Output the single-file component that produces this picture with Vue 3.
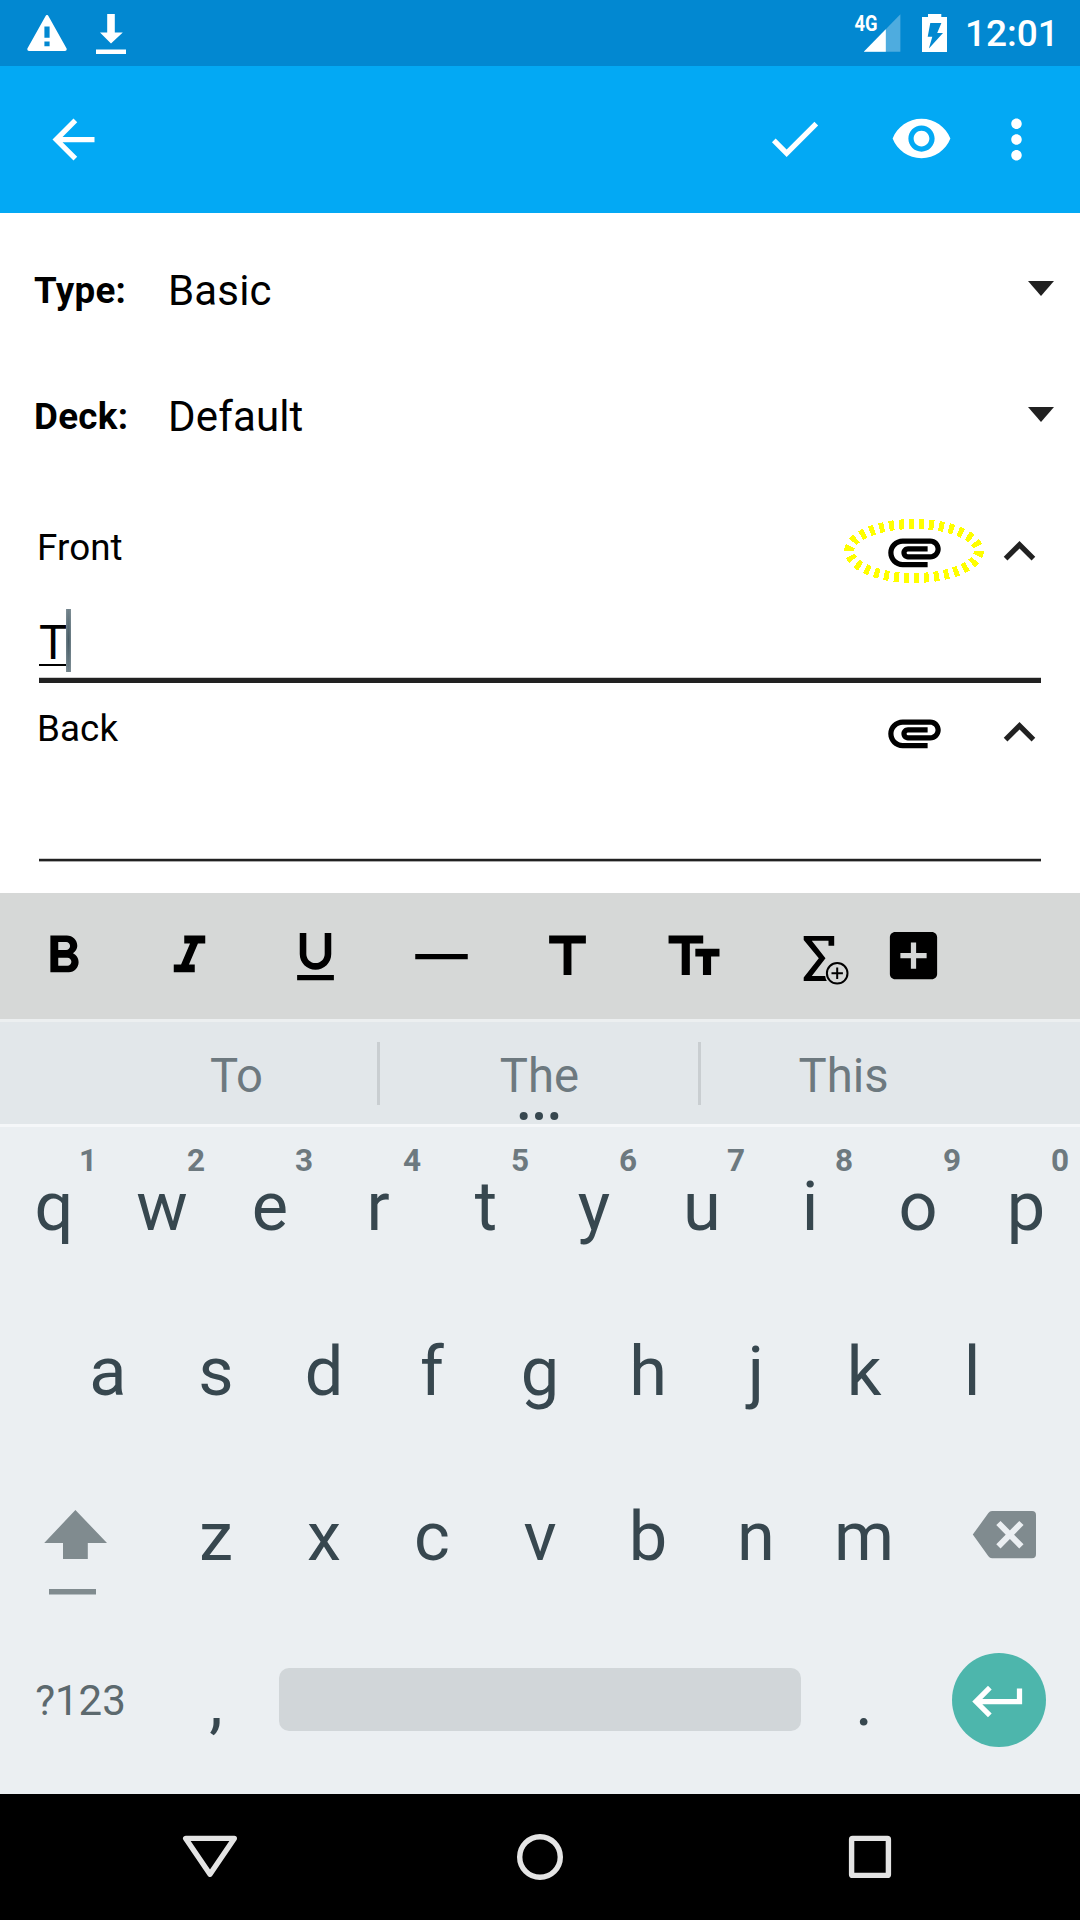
<script setup>
const selectors = [
  { label: 'Type:', value: 'Basic' },
  { label: 'Deck:', value: 'Default' }
]

const fields = [
  { name: 'Front', value: 'T', active: true },
  { name: 'Back', value: '', active: false }
]

const formatIcons = [
  { name: 'bold', d: 'M15.6 10.79c.97-.67 1.65-1.77 1.65-2.79 0-2.26-1.75-4-4-4H7v14h7.04c2.09 0 3.71-1.7 3.71-3.79 0-1.52-.86-2.82-2.15-3.42zM10 6.5h3c.83 0 1.5.67 1.5 1.5s-.67 1.5-1.5 1.5h-3v-3zm3.5 9H10v-3h3.5c.83 0 1.5.67 1.5 1.5s-.67 1.5-1.5 1.5z' },
  { name: 'italic', d: 'M10 4v3h2.21l-3.42 8H6v3h8v-3h-2.21l3.42-8H18V4z' },
  { name: 'underline', d: 'M12 17c3.31 0 6-2.69 6-6V3h-2.5v8c0 1.93-1.57 3.5-3.5 3.5S8.5 12.93 8.5 11V3H6v8c0 3.31 2.69 6 6 6zm-7 2v2h14v-2H5z' },
  { name: 'rule', d: 'M2 11h20v2H2z' },
  { name: 'title', d: 'M5 4v3h5.5v12h3V7H19V4z' },
  { name: 'size', d: 'M2.5 4v3h5v12h3.1V7h5.1V4zM21.9 9h-9.2v3h2.9v7h3.1v-7h3.2z' }
]

const suggestions = ['To', 'The', 'This']

const topRow = [...'qwertyuiop'].map((letter, i) => ({ letter, hint: String((i + 1) % 10) }))
const homeRow = [...'asdfghjkl']
const bottomRow = [...'zxcvbnm']
</script>

<template>
  <div class="screen">
    <header class="status">
      <div class="status-group">
        <svg class="warning" width="40" height="36" viewBox="0 0 40 36">
          <path fill="#fff" fill-rule="evenodd" d="M18.6.9Q20 -1 21.4.9L39.6 33.4Q40.2 35.8 38 36H2Q-.2 35.8.4 33.4ZM17.4 11.6v11.2h5.2V11.6ZM17.4 26.4v4.8h5.2v-4.8Z" />
        </svg>
        <svg class="download" width="30" height="40" viewBox="0 0 30 40">
          <path fill="#fff" d="M11.2 0h7.6v18.6h8L15 29.4 4 18.6h7.2zM0 35.4h30V40H0z" />
        </svg>
      </div>
      <div class="status-group">
        <svg class="signal" width="47" height="39" viewBox="0 0 47 39">
          <path fill="#fff" fill-opacity=".3" d="M45.4 1.3v37.4H8.8z" />
          <path fill="#fff" d="M30.8 16.3v22.4H8.8z" />
          <text class="network" x="-0.4" y="18.4" textLength="23" lengthAdjust="spacingAndGlyphs">4G</text>
        </svg>
        <svg class="battery" width="25" height="38" viewBox="0 0 25 38">
          <path fill="#fff" fill-rule="evenodd" d="M6 0h13.3v3H25v35H0V3h6zM8.3 9 5.7 22.7h4.6L6.9 34.6 21 19h-5.8l4.2-10z" />
        </svg>
        <span class="clock">12:01</span>
      </div>
    </header>

    <nav class="appbar">
      <svg class="icon back" viewBox="0 0 24 24"><path d="M20 11H7.83l5.59-5.59L12 4l-8 8 8 8 1.41-1.41L7.83 13H20z" /></svg>
      <svg class="icon check" viewBox="0 0 24 24"><path d="M9 16.17 4.83 12l-1.42 1.41L9 19 21 7l-1.41-1.41z" /></svg>
      <svg class="icon eye" viewBox="0 0 24 24"><path d="M12 4.5C7 4.5 2.73 7.61 1 12c1.73 4.39 6 7.5 11 7.5s9.27-3.11 11-7.5c-1.73-4.39-6-7.5-11-7.5zM12 17c-2.76 0-5-2.24-5-5s2.24-5 5-5 5 2.24 5 5-2.24 5-5 5zm0-8c-1.66 0-3 1.34-3 3s1.34 3 3 3 3-1.34 3-3-1.34-3-3-3z" /></svg>
      <svg class="icon more" viewBox="0 0 24 24"><path d="M12 8c1.1 0 2-.9 2-2s-.9-2-2-2-2 .9-2 2 .9 2 2 2zm0 2c-1.1 0-2 .9-2 2s.9 2 2 2 2-.9 2-2-.9-2-2-2zm0 6c-1.1 0-2 .9-2 2s.9 2 2 2 2-.9 2-2-.9-2-2-2z" /></svg>
    </nav>

    <main class="form">
      <div v-for="s in selectors" :key="s.label" class="selector">
        <span class="selector-label">{{ s.label }}</span>
        <span class="selector-value">{{ s.value }}</span>
        <svg class="caret" width="26" height="15" viewBox="0 0 26 15"><path fill="#212121" d="M0 0h26L13 15z" /></svg>
      </div>

      <section v-for="f in fields" :key="f.name" class="field">
        <div class="field-head">
          <span class="field-name">{{ f.name }}</span>
          <div class="clip">
            <svg class="icon" viewBox="0 0 24 24"><path d="M2 12.5C2 9.46 4.46 7 7.5 7H18c2.21 0 4 1.79 4 4s-1.79 4-4 4H9.5C8.12 15 7 13.88 7 12.5S8.12 10 9.5 10H17v2H9.41c-.55 0-.55 1 0 1H18c1.1 0 2-.9 2-2s-.9-2-2-2H7.5C5.57 9 4 10.57 4 12.5S5.57 16 7.5 16H17v2H7.5C4.46 18 2 15.54 2 12.5z" /></svg>
            <svg v-if="f.active" class="ring" width="144" height="68" viewBox="-72 -34 144 68">
              <ellipse rx="64.8" ry="27" pathLength="300" />
            </svg>
          </div>
          <svg class="icon chevron" viewBox="0 0 24 24"><path d="m12 8-6 6 1.41 1.41L12 10.83l4.59 4.58L18 14z" /></svg>
        </div>
        <div class="input" :class="{ active: f.active }">
          <template v-if="f.active">
            <span class="typed">{{ f.value }}</span>
            <span class="cursor"></span>
          </template>
        </div>
      </section>
    </main>

    <div class="format">
      <svg v-for="i in formatIcons" :key="i.name" class="icon format-icon" viewBox="0 0 24 24"><path :d="i.d" /></svg>
      <svg class="icon" viewBox="0 0 63 63">
        <path d="M15.7 11h30.5v9.7h-5.7v-5H23.8l13.7 17.6L23.8 51h13.4q.3 2.8 1.6 5H15.7v-3.6l15.1-19.1L15.7 15z" />
        <g fill="none" stroke="#000" stroke-width="2"><circle cx="49.2" cy="48.3" r="10.3" /><path d="M49.2 42.6v11.4M43.5 48.3h11.4" /></g>
      </svg>
      <svg class="icon add" viewBox="0 0 24 24"><path d="M19 3H5c-1.11 0-2 .9-2 2v14c0 1.1.89 2 2 2h14c1.1 0 2-.9 2-2V5c0-1.1-.9-2-2-2zm-2 10h-4v4h-2v-4H7v-2h4V7h2v4h4v2z" /></svg>
    </div>

    <div class="suggestions">
      <div v-for="(word, i) in suggestions" :key="word" class="suggestion">
        {{ word }}
        <svg v-if="i === 1" class="dots" width="40" height="8" viewBox="-20 -4 40 8"><circle cx="-15.3" r="4" /><circle r="4" /><circle cx="15.3" r="4" /></svg>
      </div>
    </div>

    <div class="keyboard">
      <div class="row">
        <div v-for="k in topRow" :key="k.letter" class="key">{{ k.letter }}<span class="hint">{{ k.hint }}</span></div>
      </div>
      <div class="row">
        <div v-for="k in homeRow" :key="k" class="key">{{ k }}</div>
      </div>
      <div class="row">
        <svg width="162" height="165" viewBox="0 0 162 165">
          <path fill="#808b8f" d="M75.4 53 107 86H87.8v16H63V86H44.2zM49 132h47v5.6H49z" />
        </svg>
        <div v-for="k in bottomRow" :key="k" class="key">{{ k }}</div>
        <svg width="162" height="165" viewBox="0 0 162 165">
          <path fill="#808b8f" d="M74 54h40q4 0 4 4v39.2q0 4-4 4H74q-2.2 0-3.6-2L54.8 77.6 70.4 56Q71.8 54 74 54z" />
          <path fill="none" stroke="#ebeff2" stroke-width="6" d="m80.4 66 23 23.4m0-23.4-23 23.4" />
        </svg>
      </div>
      <div class="row">
        <div class="key symbols">?123</div>
        <div class="key">,</div>
        <div class="space"></div>
        <div class="key">.</div>
        <div class="enter">
          <svg class="icon" viewBox="0 0 24 24"><path d="M19 7v4H5.83l3.58-3.59L8 6l-6 6 6 6 1.41-1.41L5.83 13H21V7z" /></svg>
        </div>
      </div>
    </div>

    <footer class="navbar">
      <svg width="60" height="60" viewBox="-30 -30 60 60"><path d="M-24.3-18.6h48.6L0 17.2z" /></svg>
      <svg width="60" height="60" viewBox="-30 -30 60 60"><circle r="20.3" /></svg>
      <svg width="60" height="60" viewBox="-30 -30 60 60"><rect x="-18.4" y="-18.6" width="36.8" height="37" rx="1" /></svg>
    </footer>
  </div>
</template>

<style>
body {
  margin: 0;
  background: #fff;
}
</style>

<style scoped>
.screen {
  display: flex;
  flex-direction: column;
  width: 1080px;
  height: 1920px;
  overflow: hidden;
  background: #fff;
  color: #000;
  font-family: Roboto, "Liberation Sans", sans-serif;
}
svg {
  display: block;
  flex: none;
}
.icon {
  width: 63px;
  height: 63px;
}

.status {
  display: flex;
  justify-content: space-between;
  height: 66px;
  background: #0288d1;
}
.status-group {
  display: flex;
}
.warning {
  margin: 14.5px 0 0 27.4px;
}
.download {
  margin: 13.7px 0 0 28.6px;
}
.signal {
  margin-top: 13px;
  overflow: visible;
}
.network {
  fill: #fff;
  font-size: 22.5px;
  font-weight: 700;
}
.battery {
  margin: 14px 0 0 20px;
}
.clock {
  width: 115px;
  margin-left: 18px;
  color: #fff;
  font-size: 37px;
  font-weight: 500;
  line-height: 68px;
}

.appbar {
  display: flex;
  height: 147px;
  background: #03a9f4;
  fill: #fff;
}
.back {
  margin: 42px 0 0 42px;
}
.check {
  margin: 41px 0 0 auto;
}
.eye {
  margin: 41px 0 0 64px;
}
.more {
  margin: 42px 32px 0;
}

.form {
  height: 666px;
  padding-top: 14px;
}
.selector {
  display: flex;
  align-items: center;
  height: 126px;
  padding: 0 26px 0 34px;
}
.selector-label {
  width: 134px;
  font-size: 36.75px;
  font-weight: 700;
  letter-spacing: 0.3px;
}
.selector-value {
  flex: 1;
  font-size: 42px;
  letter-spacing: 0.15px;
}
.caret {
  margin-bottom: 4px;
}
.field {
  height: 181px;
}
.field:nth-of-type(1) {
  margin-top: 24px;
}
.field-head {
  display: flex;
  align-items: center;
  height: 97px;
  padding: 0 29px 0 37px;
}
.field-name {
  flex: 1;
  margin-bottom: 8px;
  font-size: 36.75px;
  letter-spacing: 0.1px;
}
.clip {
  position: relative;
  margin-right: 42px;
}
.ring {
  position: absolute;
  left: -41px;
  top: -3px;
}
.ring ellipse {
  fill: none;
  stroke: #ff0;
  stroke-width: 10;
  stroke-dasharray: 5 5;
  shape-rendering: crispEdges;
}
.chevron {
  fill: #212121;
}
.input {
  display: flex;
  box-sizing: border-box;
  height: 81px;
  margin: 0 39px;
  padding-top: 9px;
  background: linear-gradient(#ccc 0 1px, #212121 1px 3px, #aaa 3px 4px) bottom / 100% 4px no-repeat;
}
.input.active {
  height: 83px;
  background: linear-gradient(#ccc 0 1px, #212121 1px) bottom / 100% 6px no-repeat;
}
.typed {
  height: 54.7px;
  border-bottom: 2px solid #000;
  font-size: 47.25px;
  line-height: 69px;
}
.cursor {
  width: 5px;
  height: 63px;
  margin-left: -1.5px;
  background: radial-gradient(ellipse at center, #455a64, #84939a);
}

.format {
  display: flex;
  align-items: flex-start;
  height: 94px;
  padding: 32px 0 0 31.5px;
  background: #d6d8d7;
}
.format-icon {
  margin-right: 63px;
}
.add {
  margin: -1px 0 0 31.5px;
}

.suggestions {
  display: flex;
  box-sizing: border-box;
  height: 108px;
  padding: 0 95px;
  border-top: 3px solid #eceff0;
  border-bottom: 3px solid #f5f7f9;
  background: #e2e7ea;
}
.suggestion {
  position: relative;
  box-sizing: border-box;
  width: 282px;
  padding-left: 1px;
  color: #6d797f;
  font-size: 47.25px;
  line-height: 109px;
  text-align: center;
}
.suggestion:nth-child(2) {
  width: 324px;
  background:
    linear-gradient(#c9ced1, #c9ced1) 0 20px / 3px 63px no-repeat,
    linear-gradient(#c9ced1, #c9ced1) 100% 20px / 3px 63px no-repeat;
}
.suggestion:nth-child(3) {
  width: 284px;
}
.dots {
  position: absolute;
  left: 142px;
  bottom: 4px;
  fill: #37474f;
}

.keyboard {
  height: 667px;
  background: #ebeff2;
}
.row {
  display: flex;
  justify-content: center;
  height: 165px;
}
.key {
  position: relative;
  width: 108px;
  color: #37474f;
  font-size: 68.5px;
  line-height: 159px;
  text-align: center;
}
.hint {
  position: absolute;
  top: 18px;
  right: 11px;
  color: #6d797f;
  font-size: 31.5px;
  font-weight: 700;
  line-height: 32px;
}
.symbols {
  width: 162px;
  color: #5c696e;
  font-size: 42px;
  line-height: 157px;
  text-indent: -1px;
}
.space {
  width: 522px;
  height: 63px;
  margin: 46px 9px 0;
  border-radius: 10px;
  background: #d1d6d9;
}
.enter {
  display: flex;
  box-sizing: border-box;
  width: 94.5px;
  height: 94.5px;
  margin: 30.5px 33.75px 0;
  padding: 17px 0 0 15.2px;
  border-radius: 50%;
  background: #4db6ac;
  fill: #fff;
}

.navbar {
  display: flex;
  align-items: center;
  justify-content: space-between;
  height: 126px;
  padding: 0 180px;
  background: #000;
}
.navbar svg {
  fill: none;
  stroke: #e4e4e4;
  stroke-width: 5.4;
  stroke-linejoin: round;
}
</style>
